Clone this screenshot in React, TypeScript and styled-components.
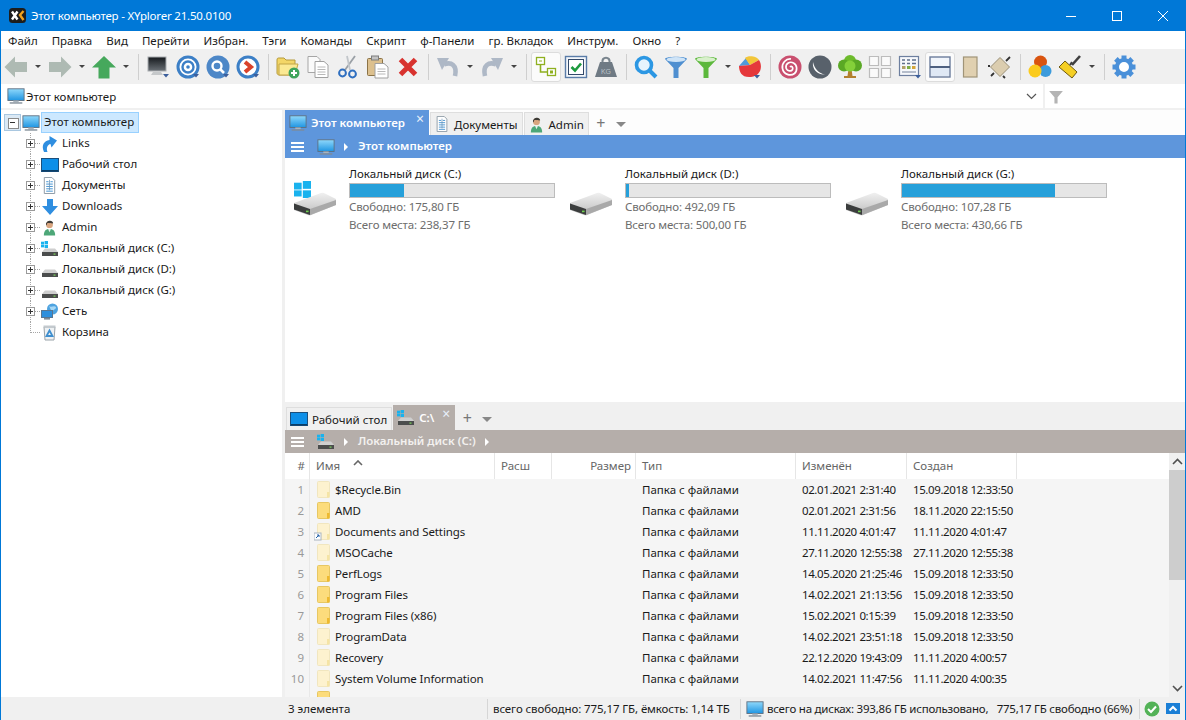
import * as React from "react";
import styled, { createGlobalStyle } from "styled-components";

const GlobalStyle = createGlobalStyle`
  html, body {
    margin: 0;
    width: 1186px;
    height: 720px;
    overflow: hidden;
    background: #fff;
  }
  * { box-sizing: border-box; }
`;

// ---- icons ----

const ComputerIcon = ({ size = 18 }: { size?: number }) => (
  <svg width={size} height={size} viewBox="0 0 20 20">
    <defs>
      <linearGradient id="scr" x1="0" y1="0" x2="0" y2="1">
        <stop offset="0" stopColor="#8fd8fb" />
        <stop offset="1" stopColor="#1f95e2" />
      </linearGradient>
    </defs>
    <rect x="1" y="2" width="18" height="13" fill="url(#scr)" stroke="#5d6f80" strokeWidth="1" />
    <rect x="7" y="15" width="6" height="2" fill="#a9b4bd" />
    <rect x="3" y="17" width="14" height="1.5" fill="#7f8b96" />
  </svg>
);

const DesktopIcon = () => (
  <svg width="18" height="16" viewBox="0 0 18 16">
    <rect x="0.5" y="1.5" width="17" height="13" fill="#0d8fe8" stroke="#1c4f7c" />
    <rect x="1" y="13" width="16" height="1.4" fill="#0a3d66" />
  </svg>
);

const LinksIcon = () => (
  <svg width="18" height="18" viewBox="0 0 18 18">
    <path d="M3 17 C0 10 3 6 8.5 5 V1 L16 5.5 L10.5 12.5 L9.5 9 C6.5 9.5 5 13 6.5 17Z" fill="#2f8ee0" />
  </svg>
);

const DocumentIcon = ({ size = 16 }: { size?: number }) => (
  <svg width={size} height={size} viewBox="0 0 16 18">
    <path d="M2.5 .5 H10.5 L13.5 3.5 V17.5 H2.5Z" fill="#fff" stroke="#8a97a3" />
    <path d="M4.5 5 H7 M9 5 H11.5 M4.5 7.5 H11.5 M4.5 10 H11.5 M4.5 12.5 H11.5 M4.5 15 H11.5" stroke="#3f8fcf" strokeWidth="1" />
    <path d="M8 3 V14" stroke="#6d93b5" strokeWidth=".8" />
  </svg>
);

const DownloadIcon = () => (
  <svg width="18" height="18" viewBox="0 0 18 18">
    <path d="M6 1 H12 V8 H17 L9 17 L1 8 H6Z" fill="#2f8ee0" />
  </svg>
);

const PersonIcon = ({ size = 17 }: { size?: number }) => (
  <svg width={size} height={size} viewBox="0 0 17 18">
    <path d="M2.5 17.5 C2.5 12 5 10.5 8.5 10.5 C12 10.5 14.5 12 14.5 17.5Z" fill="#4da778" />
    <circle cx="8.5" cy="6" r="3.6" fill="#d9a57f" />
    <path d="M4.8 6 C4.4 1.5 12 0 12.4 4.6 C10.5 4.8 8 4 6.6 4.2 C6 4.6 5.6 5.4 5.6 6.8Z" fill="#3c3a36" />
    <path d="M7 10.5 L8.5 14 L10 10.5Z" fill="#e9f2ec" />
  </svg>
);

const WinLogo = ({ x, y, s }: { x: number; y: number; s: number }) => (
  <g fill="#19b2ee">
    <rect x={x} y={y + s * 0.1} width={s * 0.45} height={s * 0.4} />
    <rect x={x + s * 0.52} y={y} width={s * 0.48} height={s * 0.46} />
    <rect x={x} y={y + s * 0.55} width={s * 0.45} height={s * 0.36} />
    <rect x={x + s * 0.52} y={y + s * 0.55} width={s * 0.48} height={s * 0.45} />
  </g>
);

const SmallDisk = ({ windows }: { windows?: boolean }) => (
  <svg width="18" height="16" viewBox="0 0 18 16">
    {windows && <WinLogo x={0} y={0} s={7} />}
    <path d="M1 11 L4 7.5 H14 L17 11Z" fill="#cfcfcf" />
    <rect x="1" y="11" width="16" height="4" fill="#4b4d4d" />
    <rect x="12.5" y="12.5" width="2" height="1.2" fill="#7bd45a" />
  </svg>
);

const NetworkIcon = () => (
  <svg width="18" height="18" viewBox="0 0 18 18">
    <circle cx="11.5" cy="6" r="5.5" fill="#4ea3e0" />
    <path d="M8 3 C10 5 13 2 15 4 C15 7 12 6 11 9Z" fill="#a7d8f5" />
    <rect x=".5" y="7.5" width="11" height="7" fill="#2e8fdc" stroke="#5a7690" />
    <rect x="3" y="15" width="6" height="1.6" fill="#7f8b96" />
  </svg>
);

const RecycleIcon = () => (
  <svg width="17" height="17" viewBox="0 0 17 17">
    <path d="M3 3 H14 L13 16 H4Z" fill="#eef1f3" stroke="#9aa3aa" />
    <rect x="2.5" y="1.5" width="12" height="2" fill="#c3c9ce" />
    <path d="M8.5 6.5 L11.5 12 H5.5Z" fill="none" stroke="#3f8fcf" strokeWidth="1.8" />
  </svg>
);

const BigDisk = ({ windows }: { windows?: boolean }) => (
  <svg width="48" height="40" viewBox="0 0 48 40">
    <defs>
      <linearGradient id="diskTop" x1="0" y1="0" x2="0" y2="1">
        <stop offset="0" stopColor="#f0f0f0" />
        <stop offset="1" stopColor="#bdbdbd" />
      </linearGradient>
    </defs>
    {windows && <WinLogo x={2} y={2} s={17} />}
    <path d="M2 24 L29 14 Q31 13.5 33 14.5 L44 20 V26 L19 36 Q18 36.4 16 36 L2 31Z" fill="url(#diskTop)" />
    <path d="M2 24.5 L18 30 V36 L2 30.5Z" fill="#3b3d3d" />
    <path d="M18 30 L44 21 V26 L18 36Z" fill="#a9a9a9" />
    <rect x="14" y="31.6" width="2.6" height="1.6" fill="#6fd04f" />
  </svg>
);

const FolderIcon = ({ $pale, $link }: { $pale?: boolean; $link?: boolean }) => (
  <svg width="16" height="18" viewBox="0 0 16 18">
    <rect x="3.5" y="0.5" width="12" height="16" rx="1" fill={$pale ? "#fdf2cf" : "#fcdc7c"} stroke={$pale ? "#f1e6bf" : "#e7c763"} />
    <rect x="13" y="11" width="2.5" height="5.5" fill={$pale ? "#f5e4a5" : "#eeb92f"} />
    {$link && (
      <g>
        <rect x="0" y="10" width="7" height="7" fill="#fff" stroke="#a9b4c0" />
        <path d="M2 15 L5 12 M3 12 H5 V14" stroke="#1e5fa8" strokeWidth="1" fill="none" />
      </g>
    )}
  </svg>
);

const CornerArrow = ({ x, y }: { x: number; y: number }) => (
  <path d={`M${x} ${y} h6 l-3 3.5Z`} fill="#3c5f9c" />
);

const T = ({ children, w = 24, h = 24 }: { children: React.ReactNode; w?: number; h?: number }) => (
  <svg width={w} height={h} viewBox="0 0 24 24">{children}</svg>
);

const BackIcon = () => <T><path d="M.5 12 L11 1.5 V7 H23 V17 H11 V22.5Z" fill="#aebab3" /></T>;
const ForwardIcon = () => <T><path d="M23.5 12 L13 1.5 V7 H1 V17 H13 V22.5Z" fill="#aebab3" /></T>;
const UpIcon = () => <T><path d="M12 1 L24 12.5 H17.5 V23.5 H6.5 V12.5 H0Z" fill="#46a85c" /></T>;

const MonitorIcon = () => (
  <T>
    <defs>
      <linearGradient id="dark" x1="0" y1="0" x2="0" y2="1">
        <stop offset="0" stopColor="#15191d" />
        <stop offset="1" stopColor="#6a7076" />
      </linearGradient>
    </defs>
    <rect x="2" y="2" width="18" height="14" fill="url(#dark)" stroke="#a8acb0" />
    <path d="M7 17 H15 L17 20 H5Z" fill="#c5c8ca" />
    <CornerArrow x={17} y={19} />
  </T>
);

const TargetIcon = () => (
  <T>
    <circle cx="12" cy="12" r="10" fill="#fff" stroke="#3c7fc6" strokeWidth="3" />
    <circle cx="12" cy="12" r="5.5" fill="#fff" stroke="#3c7fc6" strokeWidth="2.4" />
    <circle cx="12" cy="12" r="1.8" fill="#3c7fc6" />
    <CornerArrow x={17} y={19} />
  </T>
);

const RoundSearchIcon = () => (
  <T>
    <circle cx="12" cy="12" r="11.5" fill="#4d87c7" />
    <circle cx="11" cy="11" r="4.5" fill="none" stroke="#fff" strokeWidth="2.4" />
    <path d="M14.5 14.5 L18 18" stroke="#fff" strokeWidth="2.6" />
    <CornerArrow x={17} y={19} />
  </T>
);

const GotoIcon = () => (
  <T>
    <circle cx="12" cy="12" r="10" fill="#fff" stroke="#3c7fc6" strokeWidth="3" />
    <path d="M9 7 L15 12 L9 17" fill="none" stroke="#d9432c" strokeWidth="4" />
    <CornerArrow x={17} y={19} />
  </T>
);

const NewFolderIcon = () => (
  <T>
    <path d="M1 5 C1 3 2 3 3 3 H8 L10 5 H19 V20 H3 C2 20 1 19 1 18Z" fill="#f3d667" stroke="#b59a3c" />
    <path d="M3 9 H22 L19 20 H3Z" fill="#fbe993" stroke="#c2a648" />
    <circle cx="18" cy="18" r="5.5" fill="#3fa45b" />
    <path d="M18 15 V21 M15 18 H21" stroke="#fff" strokeWidth="2" />
  </T>
);

const CopyIcon = () => (
  <T>
    <path d="M2 1.5 H11 L14 4.5 V17.5 H2Z" fill="#fafafa" stroke="#a6a6a6" />
    <path d="M9 6.5 H18 L22 10 V22.5 H9Z" fill="#fff" stroke="#a0a0a0" />
    <path d="M11.5 12 H19.5 M11.5 14.5 H19.5 M11.5 17 H19.5 M11.5 19.5 H19.5" stroke="#b8b8b8" />
  </T>
);

const ScissorsIcon = () => (
  <T>
    <path d="M9 15 L19 1" stroke="#9aa0a6" strokeWidth="1.8" />
    <path d="M14 15 L11 1" stroke="#c2c6ca" strokeWidth="1.8" />
    <circle cx="6.5" cy="18" r="3.4" fill="none" stroke="#2f6fc0" strokeWidth="2" />
    <circle cx="16.5" cy="19" r="3.4" fill="none" stroke="#2f6fc0" strokeWidth="2" />
  </T>
);

const PasteIcon = () => (
  <T>
    <rect x="1.5" y="3.5" width="15" height="17" rx="1" fill="#dcc08e" stroke="#8b7347" />
    <rect x="5.5" y="1" width="7" height="4" fill="#c4c4c4" stroke="#7d7d7d" />
    <path d="M9 8.5 H18 L22 12 V23 H9Z" fill="#fff" stroke="#a0a0a0" />
    <path d="M11.5 14 H19.5 M11.5 16.5 H19.5 M11.5 19 H19.5" stroke="#b8b8b8" />
  </T>
);

const DeleteIcon = () => <T><path d="M4.5 4.5 L19.5 19.5 M19.5 4.5 L4.5 19.5" stroke="#d8332f" strokeWidth="5" /></T>;

const UndoIcon = () => (
  <T>
    <path d="M8 9.5 C15 6.5 21.5 10 19 21" fill="none" stroke="#aeb8c6" strokeWidth="4.6" />
    <path d="M1 3 H13 L6 15Z" fill="#aeb8c6" />
  </T>
);

const RedoIcon = () => (
  <T>
    <path d="M16 9.5 C9 6.5 2.5 10 5 21" fill="none" stroke="#aeb8c6" strokeWidth="4.6" />
    <path d="M23 3 H11 L18 15Z" fill="#aeb8c6" />
  </T>
);

const BranchIcon = () => (
  <T>
    <rect x="2.5" y="2.5" width="8" height="7" fill="#fff" stroke="#8fb020" strokeWidth="1.3" />
    <path d="M5 6 H8" stroke="#8fb020" />
    <path d="M6.5 10 V17 H13" fill="none" stroke="#8fb020" strokeWidth="1.6" />
    <rect x="13.5" y="13.5" width="8" height="7" fill="#fff" stroke="#8fb020" strokeWidth="1.3" />
    <rect x="16" y="15.5" width="3" height="3" fill="#8fb020" />
  </T>
);

const CheckBoxIcon = () => (
  <T>
    <rect x="1.5" y="1.5" width="21" height="21" fill="#f4f7fb" stroke="#5a7ca8" strokeWidth="1.4" />
    <rect x="4.5" y="4.5" width="15" height="15" fill="#fff" stroke="#33496a" />
    <path d="M7.5 12 L11 15.5 L17 8.5" fill="none" stroke="#1d9a3e" strokeWidth="2.6" />
  </T>
);

const WeightIcon = () => (
  <T>
    <path d="M8.5 8 C7 1 17 1 15.5 8" fill="none" stroke="#7a858e" strokeWidth="2.2" />
    <path d="M6 7 H18 L23 22 H1Z" fill="#6f7a84" />
    <text x="12" y="19" fontSize="7" textAnchor="middle" fill="#b9c2c9" fontFamily="Liberation Sans, sans-serif">KG</text>
  </T>
);

const MagnifierIcon = () => (
  <T>
    <circle cx="10" cy="10" r="7.5" fill="#e8f4fd" stroke="#2c97e3" strokeWidth="3.6" />
    <path d="M15.5 15.5 L22 22" stroke="#2c97e3" strokeWidth="4" />
  </T>
);

const FunnelIcon = ({ color, rim }: { color: string; rim: string }) => (
  <T>
    <path d="M1 4 C1 1 23 1 23 4 L14.5 13 V23 H9.5 V13Z" fill={color} />
    <ellipse cx="12" cy="4.5" rx="9.5" ry="2.4" fill={rim} />
  </T>
);

const PieIcon = () => (
  <T>
    <path d="M1 11 L8 3 L12 10Z" fill="#4f9bd9" />
    <path d="M7 3 C10 0 19 1 21 5 L12 10Z" fill="#f2c63a" />
    <path d="M1 11 L12 10 L21 5 C25 11 23 21 13 22 C4 23 1 17 1 11Z" fill="#e5383b" />
    <CornerArrow x={16} y={20} />
  </T>
);

const SpiralIcon = () => (
  <T>
    <circle cx="12" cy="12" r="11.5" fill="#c9506f" />
    <path d="M12 12 C13.5 10.5 15.5 12.5 14.5 14.5 C13 17 8.5 16 8 12.5 C7.5 8.5 12 6 15.5 8 C19.5 10 19.5 16 16.5 18.5 C12.5 21.5 5.5 19.5 4.5 13.5 C3.5 8 8 3.5 13 4" fill="none" stroke="#fff" strokeWidth="1.7" />
  </T>
);

const MoonIcon = () => (
  <T>
    <circle cx="12" cy="12" r="11.5" fill="#58616b" />
    <path d="M5 7 C4 14 9 20 17 19.5 C11 18.5 6.5 14 5 7Z" fill="#fff" />
  </T>
);

const TreeIcon = () => (
  <T>
    <path d="M10.5 14 H13.5 L14.5 21 H18 V23 H6 V21 H9.5Z" fill="#b3802e" />
    <circle cx="12" cy="6" r="6" fill="#6dbb2c" />
    <circle cx="6" cy="10.5" r="6" fill="#5aa825" />
    <circle cx="18" cy="10.5" r="6" fill="#5aa825" />
    <circle cx="12" cy="11" r="5.5" fill="#84d03a" />
  </T>
);

const GridIcon = () => (
  <T>
    <path d="M1.5 1.5 H10.5 V10.5 H1.5Z M13.5 1.5 H22.5 V10.5 H13.5Z M1.5 13.5 H10.5 V22.5 H1.5Z M13.5 13.5 H22.5 V22.5 H13.5Z" fill="#fafafa" stroke="#bcbcbc" strokeWidth="1.2" />
  </T>
);

const TableIcon = () => (
  <T>
    <rect x="1.5" y="1.5" width="19" height="19" fill="#f6f8fb" stroke="#6d7f9f" strokeWidth="1.2" />
    <path d="M4 5 H7 M9 5 H12 M14 5 H18 M4 8.5 H7 M9 8.5 H12 M14 8.5 H18" stroke="#5f6f8c" strokeWidth="1.6" />
    <rect x="4" y="11" width="3.5" height="3" fill="#b0a06a" />
    <rect x="9" y="11" width="3.5" height="3" fill="#7dae45" />
    <rect x="14" y="11" width="3.5" height="3" fill="#d5a53a" />
    <path d="M4 17 H18" stroke="#a5aec0" strokeWidth="1.6" />
    <CornerArrow x={17} y={20} />
  </T>
);

const SplitIcon = () => (
  <T>
    <rect x="2" y="2" width="20" height="20" fill="#f1f5fb" stroke="#6c7d9c" strokeWidth="1.4" />
    <path d="M2 12 H22" stroke="#4c5f80" strokeWidth="2" />
    <rect x="3" y="13" width="18" height="8" fill="#dfe8f5" />
  </T>
);

const PaperIcon = () => (
  <T>
    <rect x="5.5" y="2" width="13.5" height="20" fill="#e0d0b0" stroke="#a09478" strokeWidth="1.2" />
  </T>
);

const EaselIcon = () => (
  <T>
    <path d="M12 2.5 L21.5 12 L12 21.5 L2.5 12Z" fill="#dbcdaf" stroke="#9a9078" strokeWidth="1" />
    <path d="M18 6 L22 2 M6 18 L3 21 M15 21 L17 23 M2 11 L0 11" stroke="#333" strokeWidth="1.8" />
  </T>
);

const ColorsIcon = () => (
  <T>
    <circle cx="12.5" cy="7" r="6.5" fill="#d9540f" />
    <circle cx="17.5" cy="16" r="6" fill="#3c9bdc" />
    <circle cx="7" cy="16" r="6.5" fill="#fbcb1c" />
  </T>
);

const BrushIcon = () => (
  <T>
    <path d="M14 10 L22 1" stroke="#3f3f3f" strokeWidth="2.6" />
    <path d="M1 12 L7 6 L19 17 L14 23Z" fill="#f5cf24" stroke="#6e5a10" strokeWidth="1" />
    <path d="M12 10 L14 7" stroke="#3f3f3f" strokeWidth="2" />
  </T>
);

const GearIcon = () => (
  <T>
    {[0, 45, 90, 135, 180, 225, 270, 315].map((deg) => (
      <rect key={deg} x="9.5" y="0.5" width="5" height="6" fill="#4a90d9" transform={`rotate(${deg} 12 12)`} />
    ))}
    <circle cx="12" cy="12" r="7" fill="#fff" stroke="#4a90d9" strokeWidth="4" />
  </T>
);

// ---- data ----

type ToolItem =
  | { kind: "tool"; icon: React.ReactNode; active?: boolean }
  | { kind: "drop" }
  | { kind: "sep" };

const tool = (icon: React.ReactNode, active?: boolean): ToolItem => ({ kind: "tool", icon, active });
const drop: ToolItem = { kind: "drop" };
const sep: ToolItem = { kind: "sep" };

const toolbarItems: ToolItem[] = [
  tool(<BackIcon />), drop, tool(<ForwardIcon />), drop, tool(<UpIcon />), drop, sep,
  tool(<MonitorIcon />), tool(<TargetIcon />), tool(<RoundSearchIcon />), tool(<GotoIcon />), sep,
  tool(<NewFolderIcon />), tool(<CopyIcon />), tool(<ScissorsIcon />), tool(<PasteIcon />), tool(<DeleteIcon />), sep,
  tool(<UndoIcon />), drop, tool(<RedoIcon />), drop, sep,
  tool(<BranchIcon />, true), tool(<CheckBoxIcon />), tool(<WeightIcon />), sep,
  tool(<MagnifierIcon />), tool(<FunnelIcon color="#4f8fd0" rim="#cfe4f7" />),
  tool(<FunnelIcon color="#5cb83c" rim="#d8f0cc" />), drop, tool(<PieIcon />), sep,
  tool(<SpiralIcon />), tool(<MoonIcon />), tool(<TreeIcon />), tool(<GridIcon />), tool(<TableIcon />),
  tool(<SplitIcon />, true), tool(<PaperIcon />), tool(<EaselIcon />), sep,
  tool(<ColorsIcon />), tool(<BrushIcon />), drop, sep, tool(<GearIcon />),
];

const menuItems = ["Файл", "Правка", "Вид", "Перейти", "Избран.", "Тэги", "Команды", "Скрипт", "ф-Панели", "гр. Вкладок", "Инструм.", "Окно", "?"];

const treeItems: { label: string; icon: React.ReactNode; leaf?: boolean }[] = [
  { label: "Links", icon: <LinksIcon /> },
  { label: "Рабочий стол", icon: <DesktopIcon /> },
  { label: "Документы", icon: <DocumentIcon size={17} /> },
  { label: "Downloads", icon: <DownloadIcon /> },
  { label: "Admin", icon: <PersonIcon /> },
  { label: "Локальный диск (C:)", icon: <SmallDisk windows /> },
  { label: "Локальный диск (D:)", icon: <SmallDisk /> },
  { label: "Локальный диск (G:)", icon: <SmallDisk /> },
  { label: "Сеть", icon: <NetworkIcon /> },
  { label: "Корзина", icon: <RecycleIcon />, leaf: true },
];

const drives = [
  { name: "Локальный диск (C:)", used: 26.5, free: "175,80 ГБ", total: "238,37 ГБ", windows: true },
  { name: "Локальный диск (D:)", used: 1.6, free: "492,09 ГБ", total: "500,00 ГБ" },
  { name: "Локальный диск (G:)", used: 75, free: "107,28 ГБ", total: "430,66 ГБ" },
];

const files = [
  { name: "$Recycle.Bin", pale: true, mod: "02.01.2021 2:31:40", made: "15.09.2018 12:33:50" },
  { name: "AMD", mod: "02.01.2021 2:31:56", made: "18.11.2020 22:15:50" },
  { name: "Documents and Settings", pale: true, link: true, mod: "11.11.2020 4:01:47", made: "11.11.2020 4:01:47" },
  { name: "MSOCache", pale: true, mod: "27.11.2020 12:55:38", made: "27.11.2020 12:55:38" },
  { name: "PerfLogs", mod: "14.05.2020 21:25:46", made: "15.09.2018 12:33:50" },
  { name: "Program Files", mod: "14.02.2021 21:13:56", made: "15.09.2018 12:33:50" },
  { name: "Program Files (x86)", mod: "15.02.2021 0:15:39", made: "15.09.2018 12:33:50" },
  { name: "ProgramData", pale: true, mod: "14.02.2021 23:51:18", made: "15.09.2018 12:33:50" },
  { name: "Recovery", pale: true, mod: "22.12.2020 19:43:09", made: "11.11.2020 4:00:57" },
  { name: "System Volume Information", pale: true, mod: "14.02.2021 11:47:56", made: "11.11.2020 4:00:35" },
];

// ---- page ----

function App() {
  return (
    <Window>
      <GlobalStyle />
      <TitleBar>
        <Logo>
          <svg width="17" height="15" viewBox="0 0 17 15">
            <rect width="17" height="15" rx="3.5" fill="#1d1d1d" />
            <path d="M3 3.5 L8.5 11.5 M8.5 3.5 L3 11.5" stroke="#fff" strokeWidth="2.4" />
            <path d="M14.5 3 L11 7 L14.5 12" fill="none" stroke="#f2a21d" strokeWidth="2.4" />
          </svg>
        </Logo>
        <TitleText>Этот компьютер - XYplorer 21.50.0100</TitleText>
        <WindowButton>
          <svg width="12" height="12" viewBox="0 0 12 12"><path d="M1 6.5 H11" stroke="#fff" /></svg>
        </WindowButton>
        <WindowButton>
          <svg width="12" height="12" viewBox="0 0 12 12"><rect x="1.5" y="1.5" width="9" height="9" fill="none" stroke="#fff" /></svg>
        </WindowButton>
        <WindowButton>
          <svg width="12" height="12" viewBox="0 0 12 12"><path d="M1 1 L11 11 M11 1 L1 11" stroke="#fff" /></svg>
        </WindowButton>
      </TitleBar>

      <MenuBar>
        {menuItems.map((item) => (
          <MenuItem key={item}>{item}</MenuItem>
        ))}
      </MenuBar>

      <Toolbar>
        {toolbarItems.map((item, i) => {
          if (item.kind === "sep") return <ToolSeparator key={i} />;
          if (item.kind === "drop") return <ToolDrop key={i} />;
          return (
            <ToolButton key={i} $active={item.active}>
              {item.icon}
            </ToolButton>
          );
        })}
      </Toolbar>

      <AddressRow>
        <ComputerIcon />
        <AddressText>Этот компьютер</AddressText>
        <AddressCaret>
          <svg width="11" height="7" viewBox="0 0 11 7"><path d="M1 1 L5.5 5.5 L10 1" fill="none" stroke="#555" strokeWidth="1.2" /></svg>
        </AddressCaret>
        <FilterBox>
          <svg width="16" height="15" viewBox="0 0 24 24">
            <path d="M1 3 H23 L14.5 13 V23 H9.5 V13Z" fill="#b4b4b4" />
          </svg>
        </FilterBox>
      </AddressRow>

      <Panes>
        <TreePane>
          <RootRow>
            <RootToggle />
            <ComputerIcon />
            <RootLabel>Этот компьютер</RootLabel>
          </RootRow>
          {treeItems.map((item, i) => (
            <TreeRow key={item.label}>
              <TreeGuide $last={i === treeItems.length - 1}>
                {!item.leaf && <Expander />}
              </TreeGuide>
              <TreeIconSlot>{item.icon}</TreeIconSlot>
              <TreeLabel>{item.label}</TreeLabel>
            </TreeRow>
          ))}
        </TreePane>

        <RightColumn>
          <TopPane>
            <TabStrip>
              <Tab $current="#5e96dc" $trail={24}>
                <ComputerIcon />
                Этот компьютер
                <TabClose>×</TabClose>
              </Tab>
              <Tab>
                <DocumentIcon />
                Документы
              </Tab>
              <Tab>
                <PersonIcon />
                Admin
              </Tab>
              <TabPlus>+</TabPlus>
              <TabMenu />
            </TabStrip>
            <Crumb $bg="#5e96dc">
              <Burger />
              <ComputerIcon />
              <CrumbArrow />
              <CrumbText $color="#fff">Этот компьютер</CrumbText>
            </Crumb>
            <DriveList>
              {drives.map((d) => (
                <DriveCard key={d.name}>
                  <BigDisk windows={d.windows} />
                  <DriveInfo>
                    <DriveName>{d.name}</DriveName>
                    <DriveBar>
                      <DriveFill style={{ width: `${d.used}%` }} />
                    </DriveBar>
                    <DriveNote>Свободно: {d.free}</DriveNote>
                    <DriveNote>Всего места: {d.total}</DriveNote>
                  </DriveInfo>
                </DriveCard>
              ))}
            </DriveList>
          </TopPane>

          <BottomPane>
            <TabStrip $gray>
              <Tab>
                <DesktopIcon />
                Рабочий стол
              </Tab>
              <Tab $current="#b5aeaa" $trail={21}>
                <SmallDisk windows />
                C:\
                <TabClose>×</TabClose>
              </Tab>
              <TabPlus>+</TabPlus>
              <TabMenu />
            </TabStrip>
            <Crumb $bg="#b5aeaa">
              <Burger />
              <SmallDisk windows />
              <CrumbArrow />
              <CrumbText $color="#f3f1ef">Локальный диск (C:)</CrumbText>
              <CrumbArrow />
            </Crumb>
            <ListArea>
              <ListColumn>
                <HeaderRow>
                  <HeadCell $right>#</HeadCell>
                  <HeadCell>
                    Имя
                    <SortMark>
                      <svg width="10" height="6" viewBox="0 0 10 6"><path d="M1 5 L5 1 L9 5" fill="none" stroke="#666" strokeWidth="1.6" /></svg>
                    </SortMark>
                  </HeadCell>
                  <HeadCell>Расш</HeadCell>
                  <HeadCell $right>Размер</HeadCell>
                  <HeadCell>Тип</HeadCell>
                  <HeadCell>Изменён</HeadCell>
                  <HeadCell>Создан</HeadCell>
                </HeaderRow>
                <FileRows>
                  {files.map((f, i) => (
                    <FileRow key={f.name}>
                      <RowNumber>{i + 1}</RowNumber>
                      <NameCell>
                        <FolderIcon $pale={f.pale} $link={f.link} />
                        {f.name}
                      </NameCell>
                      <span />
                      <span />
                      <FileCell>Папка с файлами</FileCell>
                      <DateCell>{f.mod}</DateCell>
                      <DateCell>{f.made}</DateCell>
                    </FileRow>
                  ))}
                  <FileRow>
                    <RowNumber />
                    <NameCell>
                      <FolderIcon />
                    </NameCell>
                  </FileRow>
                </FileRows>
              </ListColumn>
              <ScrollBar>
                <ScrollButton>
                  <svg width="11" height="7" viewBox="0 0 11 7"><path d="M1 6 L5.5 1.5 L10 6" fill="none" stroke="#505050" strokeWidth="1.6" /></svg>
                </ScrollButton>
                <ScrollThumb />
                <ScrollTrack />
                <ScrollButton>
                  <svg width="11" height="7" viewBox="0 0 11 7"><path d="M1 1 L5.5 5.5 L10 1" fill="none" stroke="#505050" strokeWidth="1.6" /></svg>
                </ScrollButton>
              </ScrollBar>
            </ListArea>
          </BottomPane>
        </RightColumn>
      </Panes>

      <StatusBar>
        <StatusCell $width={203} $pad={3}>3 элемента</StatusCell>
        <StatusCell $width={253} $pad={5} $track={-0.1}>всего свободно: 775,17 ГБ, ёмкость: 1,14 ТБ</StatusCell>
        <StatusCell $width={399} $pad={5} $gap={3} $track={-0.22}>
          <ComputerIcon />
          всего на дисках: 393,86 ГБ использовано,&nbsp;&nbsp; 775,17 ГБ свободно (66%)
        </StatusCell>
        <StatusIcons>
          <svg width="16" height="16" viewBox="0 0 16 16">
            <circle cx="8" cy="8" r="7.5" fill="#53b257" />
            <path d="M4 8 L7 11 L12 5.5" fill="none" stroke="#fff" strokeWidth="2" />
          </svg>
          <svg width="14" height="11" viewBox="0 0 14 11">
            <rect width="14" height="11" fill="#1b7fd6" />
            <path d="M3.5 7.5 L7 4 L10.5 7.5" fill="none" stroke="#fff" strokeWidth="2" />
          </svg>
        </StatusIcons>
      </StatusBar>
    </Window>
  );
}

export default App;

// ---- styles ----

const uiFont = `"Noto Sans", "Open Sans", sans-serif`;

const Window = styled.div`
  display: flex;
  flex-direction: column;
  width: 1186px;
  height: 720px;
  border-left: 1px solid #0078d7;
  border-right: 1px solid #0078d7;
  font-family: ${uiFont};
  font-size: 11.5px;
  color: #1a1a1a;
  background: #f0f0f0;
`;

const TitleBar = styled.div`
  display: flex;
  align-items: center;
  flex: 0 0 31px;
  margin: 0 -1px;
  padding-left: 9px;
  background: #0078d7;
  color: #fff;
`;

const Logo = styled.div`
  display: flex;
  margin-right: 5px;
`;

const TitleText = styled.div`
  flex: 1;
  letter-spacing: -0.2px;
`;

const WindowButton = styled.div`
  display: flex;
  align-items: center;
  justify-content: center;
  width: 46px;
  height: 31px;
`;

const MenuBar = styled.div`
  display: flex;
  align-items: center;
  flex: 0 0 18px;
  gap: 14px;
  padding: 1px 0 0 7px;
  background: #fff;
`;

const MenuItem = styled.span`
  line-height: 17px;
`;

const Toolbar = styled.div`
  display: flex;
  align-items: center;
  flex: 0 0 35px;
  background: #f0f0f0;
`;

const ToolButton = styled.div<{ $active?: boolean }>`
  display: flex;
  align-items: center;
  justify-content: center;
  width: 30px;
  height: 30px;
  border-radius: 3px;
  background: ${(p) => (p.$active ? "#fbfbfb" : "transparent")};
  border: 1px solid ${(p) => (p.$active ? "#dcdcdc" : "transparent")};
`;

const ToolDrop = styled.div`
  width: 14px;
  display: flex;
  justify-content: center;
  &::before {
    content: "";
    border-left: 3px solid transparent;
    border-right: 3px solid transparent;
    border-top: 3px solid #444;
  }
`;

const ToolSeparator = styled.div`
  width: 10px;
  display: flex;
  justify-content: center;
  &::before {
    content: "";
    width: 1px;
    height: 26px;
    background: #cfcfcf;
  }
`;

const AddressRow = styled.div`
  display: flex;
  align-items: center;
  flex: 0 0 24px;
  padding-left: 6px;
  background: #fff;
`;

const AddressText = styled.span`
  flex: 1;
  margin-left: 1px;
`;

const AddressCaret = styled.div`
  display: flex;
  margin-right: 6px;
`;

const FilterBox = styled.div`
  display: flex;
  align-items: center;
  width: 142px;
  height: 24px;
  padding-left: 3px;
  border-left: 2px solid #f0f0f0;
`;

const Panes = styled.div`
  display: flex;
  flex: 1;
  min-height: 0;
  border-top: 2px solid #f0f0f0;
`;

const TreePane = styled.div`
  width: 281px;
  padding-top: 2px;
  background: #fff;
`;

const RootRow = styled.div`
  display: flex;
  align-items: center;
  height: 21px;
  padding-left: 3px;
  gap: 1px;
`;

const RootToggle = styled.div`
  position: relative;
  width: 17px;
  height: 17px;
  background: #dbe9f5;
  border: 1px solid #a9c7e0;
  &::before {
    content: "";
    position: absolute;
    left: 3px;
    top: 3px;
    width: 9px;
    height: 9px;
    background: #fff;
    border: 1px solid #8a8a8a;
  }
  &::after {
    content: "";
    position: absolute;
    left: 5px;
    top: 7px;
    width: 5px;
    height: 1px;
    background: #333;
  }
`;

const RootLabel = styled.span`
  display: flex;
  align-items: center;
  height: 21px;
  width: 98px;
  padding: 0 0 2px 2px;
  white-space: nowrap;
  background: #cce8ff;
  border: 1px solid #99d1ff;
`;

const TreeRow = styled.div`
  display: flex;
  align-items: center;
  height: 21px;
`;

const TreeGuide = styled.div<{ $last?: boolean }>`
  position: relative;
  flex: 0 0 39px;
  height: 21px;
  &::before {
    content: "";
    position: absolute;
    left: 29px;
    top: 0;
    height: ${(p) => (p.$last ? "11px" : "21px")};
    border-left: 1px dotted #a6a6a6;
  }
  &::after {
    content: "";
    position: absolute;
    left: 29px;
    top: 10px;
    width: 10px;
    border-top: 1px dotted #a6a6a6;
  }
`;

const Expander = styled.div`
  position: absolute;
  z-index: 1;
  left: 25px;
  top: 6px;
  width: 9px;
  height: 9px;
  background: #fff;
  border: 1px solid #9a9a9a;
  &::before {
    content: "";
    position: absolute;
    left: 1px;
    top: 3px;
    width: 5px;
    height: 1px;
    background: #333;
  }
  &::after {
    content: "";
    position: absolute;
    left: 3px;
    top: 1px;
    width: 1px;
    height: 5px;
    background: #333;
  }
`;

const TreeIconSlot = styled.div`
  display: flex;
  align-items: center;
  justify-content: center;
  flex: 0 0 19px;
`;

const TreeLabel = styled.span`
  margin: 0 0 2px 3px;
`;

const RightColumn = styled.div`
  display: flex;
  flex-direction: column;
  flex: 1;
  min-width: 0;
  margin-left: 3px;
`;

const TopPane = styled.div`
  display: flex;
  flex-direction: column;
  flex: 0 0 292px;
  background: #fff;
`;

const BottomPane = styled.div`
  display: flex;
  flex-direction: column;
  flex: 1;
  min-height: 0;
  margin-top: 3px;
`;

const TabStrip = styled.div<{ $gray?: boolean }>`
  display: flex;
  align-items: flex-end;
  flex: 0 0 25px;
  background: ${(p) => (p.$gray ? "#f0f0f0" : "#fdfdfd")};
  padding-left: ${(p) => (p.$gray ? "1px" : "0")};
`;

const Tab = styled.div<{ $current?: string; $trail?: number }>`
  position: relative;
  display: flex;
  align-items: center;
  gap: 4px;
  height: ${(p) => (p.$current ? "25px" : "23px")};
  padding: 0 ${(p) => p.$trail ?? 4}px 0 ${(p) => (p.$current ? 4 : 3)}px;
  margin-right: 1px;
  background: ${(p) => p.$current ?? "#f0f0f0"};
  color: ${(p) => (p.$current ? "#fff" : "#1a1a1a")};
  font-weight: ${(p) => (p.$current ? 600 : 400)};
  border: ${(p) => (p.$current ? "none" : "1px solid #dedede")};
  border-bottom: none;
`;

const TabClose = styled.span`
  position: absolute;
  right: 5px;
  top: 1px;
  font-size: 14px;
  line-height: 16px;
  font-weight: 400;
  color: #e8f0fa;
`;

const TabPlus = styled.span`
  margin-left: 3px;
  width: 16px;
  height: 23px;
  line-height: 22px;
  text-align: center;
  font-size: 16px;
  color: #777;
`;

const TabMenu = styled.div`
  align-self: center;
  width: 0;
  height: 0;
  margin: 3px 0 0 7px;
  border-left: 5px solid transparent;
  border-right: 5px solid transparent;
  border-top: 5px solid #888;
`;

const Crumb = styled.div<{ $bg: string }>`
  display: flex;
  align-items: center;
  flex: 0 0 23px;
  padding-left: 6px;
  background: ${(p) => p.$bg};
`;

const Burger = styled.div`
  width: 13px;
  height: 10px;
  margin-right: 13px;
  border-top: 2px solid #fff;
  border-bottom: 2px solid #fff;
  background: linear-gradient(#fff, #fff) center / 100% 2px no-repeat;
`;

const CrumbArrow = styled.div`
  width: 0;
  height: 0;
  margin: 0 10px 0 9px;
  border-top: 4px solid transparent;
  border-bottom: 4px solid transparent;
  border-left: 4px solid #fff;
`;

const CrumbText = styled.span<{ $color: string }>`
  margin-bottom: 2px;
  font-weight: 600;
  color: ${(p) => p.$color};
`;

const DriveList = styled.div`
  display: flex;
  padding: 6px 0 0 7px;
`;

const DriveCard = styled.div`
  display: flex;
  align-items: flex-start;
  width: 276px;
  gap: 9px;
  & > svg {
    margin-top: 15px;
  }
`;

const DriveInfo = styled.div`
  display: flex;
  flex-direction: column;
  width: 206px;
`;

const DriveName = styled.div`
  line-height: 19px;
`;

const DriveBar = styled.div`
  height: 15px;
  background: #e6e6e6;
  border: 1px solid #bcbcbc;
`;

const DriveFill = styled.div`
  height: 100%;
  background: #26a0da;
`;

const DriveNote = styled.div`
  color: #6d6d6d;
  line-height: 18px;
  letter-spacing: -0.15px;
`;

const ListArea = styled.div`
  display: flex;
  flex: 1;
  min-height: 0;
`;

const ListColumn = styled.div`
  display: flex;
  flex-direction: column;
  flex: 1;
  min-width: 0;
`;

const columns = "25px 185px 57px 84px 160px 111px 110px";

const HeaderRow = styled.div`
  display: grid;
  grid-template-columns: ${columns};
  flex: 0 0 26px;
  background: #fff;
  color: #666;
`;

const HeadCell = styled.div<{ $right?: boolean }>`
  display: flex;
  align-items: center;
  justify-content: ${(p) => (p.$right ? "flex-end" : "flex-start")};
  padding: 0 ${(p) => (p.$right ? "4px" : "0")} 1px 6px;
  border-right: 1px solid #e6e6e6;
`;

const SortMark = styled.span`
  display: flex;
  margin: -5px 0 0 13px;
`;

const FileRows = styled.div`
  flex: 1;
  min-height: 0;
  overflow: hidden;
  background: #f5f5f5;
`;

const FileRow = styled.div`
  display: grid;
  grid-template-columns: ${columns};
  height: 21px;
  align-items: center;
`;

const RowNumber = styled.div`
  padding-right: 5px;
  text-align: right;
  color: #999;
  height: 21px;
  line-height: 21px;
  border-right: 1px solid #e8e8e8;
`;

const NameCell = styled.div`
  display: flex;
  align-items: center;
  gap: 5px;
  padding-left: 4px;
  letter-spacing: -0.1px;
`;

const FileCell = styled.div`
  padding-left: 6px;
  white-space: nowrap;
`;

const DateCell = styled(FileCell)`
  letter-spacing: -0.4px;
`;

const ScrollBar = styled.div`
  display: flex;
  flex-direction: column;
  flex: 0 0 16px;
  background: #f0f0f0;
`;

const ScrollButton = styled.div`
  display: flex;
  align-items: center;
  justify-content: center;
  flex: 0 0 17px;
  background: #f0f0f0;
`;

const ScrollThumb = styled.div`
  flex: 0 0 110px;
  background: #cdcdcd;
`;

const ScrollTrack = styled.div`
  flex: 1;
`;

const StatusBar = styled.div`
  display: flex;
  align-items: center;
  flex: 0 0 23px;
  padding-left: 284px;
  background: #f0f0f0;
`;

const StatusCell = styled.div<{ $width: number; $pad: number; $gap?: number; $track?: number }>`
  display: flex;
  align-items: center;
  gap: ${(p) => p.$gap ?? 0}px;
  width: ${(p) => p.$width}px;
  height: 20px;
  padding-left: ${(p) => p.$pad}px;
  letter-spacing: ${(p) => p.$track ?? 0}px;
  border-right: 1px solid #d6d6d6;
  white-space: nowrap;
`;

const StatusIcons = styled.div`
  display: flex;
  align-items: center;
  gap: 6px;
  padding-left: 4px;
`;
